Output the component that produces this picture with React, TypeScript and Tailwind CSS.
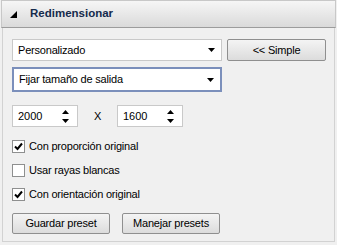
import React from "react";

const font = { fontFamily: "'Liberation Sans', Arial, sans-serif" };

function Arrow() {
  return (
    <svg width="7" height="4" viewBox="0 0 7 4" className="shrink-0">
      <path d="M0 0H7L3.5 4Z" fill="#000" />
    </svg>
  );
}

function Combo({ text, focused }: { text: string; focused?: boolean }) {
  return (
    <div
      className={
        "flex items-center justify-between w-[210px] bg-white pl-[5px] pr-[6px] text-[11px] tracking-[-0.2px] text-black " +
        (focused ? "h-[25px] border-2 border-[#7b8fbb]" : "h-[22px] border border-[#c9c9c9]")
      }
    >
      <span>{text}</span>
      <Arrow />
    </div>
  );
}

function Spin({ value }: { value: string }) {
  return (
    <div className="flex items-center justify-between w-[66px] h-[22px] bg-white border border-[#c9c9c9] pl-[5px] pr-[8px] text-[11px] text-black">
      <span>{value}</span>
      <div className="flex flex-col gap-[5px]">
        <svg width="7" height="4" viewBox="0 0 7 4">
          <path d="M0 4H7L3.5 0Z" fill="#000" />
        </svg>
        <svg width="7" height="4" viewBox="0 0 7 4">
          <path d="M0 0H7L3.5 4Z" fill="#000" />
        </svg>
      </div>
    </div>
  );
}

function Check({ label, checked }: { label: string; checked?: boolean }) {
  return (
    <div className="flex items-center h-[24px] gap-[4px] text-[11px] tracking-[-0.2px] text-black">
      <div className="w-[13px] h-[13px] bg-white border border-[#8e8f8f] flex items-center justify-center">
        {checked && (
          <svg width="9" height="9" viewBox="0 0 9 9">
            <path d="M1 4.5L3.5 7L8 1.5" stroke="#000" strokeWidth="2" fill="none" />
          </svg>
        )}
      </div>
      <span>{label}</span>
    </div>
  );
}

function Btn({ label, w }: { label: string; w: string }) {
  return (
    <div
      className={
        "flex items-center justify-center h-[21px] rounded-[2px] border border-[#8f8f8f] bg-gradient-to-b from-[#f4f4f4] to-[#dcdcdc] text-[11px] tracking-[-0.2px] text-black " +
        w
      }
    >
      {label}
    </div>
  );
}

export default function App() {
  return (
    <div className="w-[337px] h-[245px] bg-[#f0f0f0] relative" style={font}>
      <div className="h-[28px] mx-[1px] border border-[#c8c8c8] border-b-[#9c9c9c] bg-gradient-to-b from-[#f6f6f6] to-[#dadada] flex items-center">
        <svg width="7" height="7" viewBox="0 0 7 7" className="ml-[8px]">
          <path d="M7 0V7H0Z" fill="#000" />
        </svg>
        <span className="ml-[13px] text-[11.5px] font-bold text-[#152a4c]">Redimensionar</span>
      </div>
      <div className="mx-[2px] h-[214px] border border-t-0 border-[#d2d2d2] pl-[9px] pt-[11px] flex flex-col">
        <div className="flex gap-[5px]">
          <Combo text="Personalizado" />
          <Btn label="<< Simple" w="w-[99px] h-[22px]" />
        </div>
        <div className="mt-[6px]">
          <Combo text="Fijar tamaño de salida" focused />
        </div>
        <div className="mt-[13px] flex items-center">
          <Spin value="2000" />
          <span className="ml-[16px] w-[23px] text-[11px] text-black">X</span>
          <Spin value="1600" />
        </div>
        <div className="mt-[7px] flex flex-col">
          <Check label="Con proporción original" checked />
          <Check label="Usar rayas blancas" />
          <Check label="Con orientación original" checked />
        </div>
        <div className="mt-[7px] flex gap-[12px]">
          <Btn label="Guardar preset" w="w-[98px]" />
          <Btn label="Manejar presets" w="w-[98px]" />
        </div>
      </div>
    </div>
  );
}
